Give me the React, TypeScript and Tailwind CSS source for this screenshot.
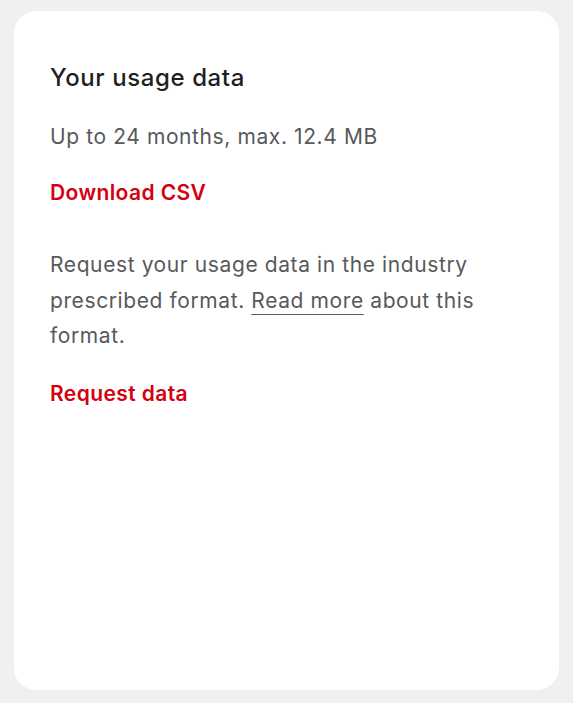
export default function App() {
  return (
    <div className="min-h-[703px] bg-[#f0f0f0] px-[14px] pt-[11px] pb-[13px] font-['Inter',sans-serif]">
      <section className="flex h-[679px] flex-col rounded-[22px] bg-white px-[36px] pt-[51px]">
        <h2 className="text-[24px] font-medium leading-[32px] tracking-[0.6px] text-[#1f1f1f]">
          Your usage data
        </h2>
        <p className="mt-[28px] text-[21px] leading-[30px] tracking-[0.6px] text-[#58595b]">
          Up to 24 months, max. 12.4 MB
        </p>
        <a
          href="#"
          className="mt-[26px] self-start text-[21px] font-semibold leading-[30px] tracking-[0.4px] text-[#d40010]"
        >
          Download CSV
        </a>
        <p className="mt-[39px] text-[21px] leading-[35.5px] tracking-[0.6px] text-[#58595b]">
          Request your usage data in the industry prescribed format.{" "}
          <a href="#" className="underline decoration-1 underline-offset-[6px]">
            Read more
          </a>{" "}
          about this format.
        </p>
        <a
          href="#"
          className="mt-[25px] self-start text-[21px] font-semibold leading-[30px] tracking-[0.4px] text-[#d40010]"
        >
          Request data
        </a>
      </section>
    </div>
  );
}
